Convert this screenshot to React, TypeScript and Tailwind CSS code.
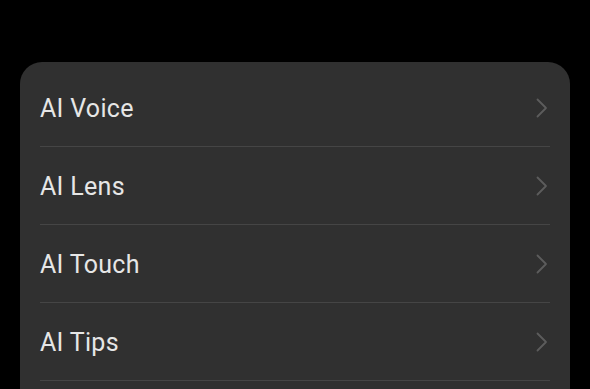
import React from 'react';

const ITEMS = ['AI Voice', 'AI Lens', 'AI Touch', 'AI Tips'];

function Chevron() {
  return (
    <svg width="12" height="20" viewBox="0 0 12 20" fill="none" className="mr-[2px]">
      <path d="M1.5 1.5L10 10L1.5 18.5" stroke="#5c5c5c" strokeWidth="1.8" strokeLinecap="round" strokeLinejoin="round" />
    </svg>
  );
}

export default function App() {
  return (
    <div className="w-[590px] h-[389px] bg-black overflow-hidden" style={{ fontFamily: 'Roboto, "Noto Sans", sans-serif' }}>
      <div className="mt-[62px] mx-[20px] rounded-[22px] bg-[#303030] pt-[7px] px-[20px] pb-[40px]">
        {ITEMS.map((label) => (
          <div key={label} className="h-[78px] flex items-center justify-between border-b border-[#454545]">
            <span className="text-[25px] text-[#e6e6e6] tracking-[0.3px] pt-[2px]">{label}</span>
            <Chevron />
          </div>
        ))}
      </div>
    </div>
  );
}
